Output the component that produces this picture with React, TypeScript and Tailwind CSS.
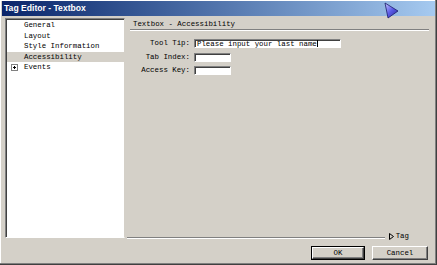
import React from 'react';

const mono = "font-['Liberation_Mono','Courier_New',monospace]";

function TreeRow({ label, active, plus }: { label: string; active?: boolean; plus?: boolean }) {
  return (
    <div className={`flex items-center h-[10.5px] leading-[10.5px] ${active ? 'bg-[#d4d0c8]' : ''}`}>
      {plus ? (
        <div className="ml-[4px] w-[7px] h-[7px] border border-[#808080] bg-white flex items-center justify-center relative">
          <div className="absolute w-[3px] h-[1px] bg-black" />
          <div className="absolute w-[1px] h-[3px] bg-black" />
        </div>
      ) : (
        <div className="ml-[4px] w-[7px]" />
      )}
      <span className="ml-[6px]">{label}</span>
    </div>
  );
}

function Field({ label, width, value, className }: { label: string; width: number; value?: string; className?: string }) {
  return (
    <div className={`flex items-center h-[9px] ${className || ''}`}>
      <div className="w-[63px] text-right leading-[9px]">{label}</div>
      <div
        className="ml-[4px] h-[9px] bg-white border-t border-l border-t-[#808080] border-l-[#808080] border-b border-r border-b-white border-r-white shadow-[inset_1px_1px_0_#404040] leading-[8px] pl-[2px] flex items-center"
        style={{ width }}
      >
        {value && (
          <>
            <span>{value}</span>
            <span className="w-[1px] h-[7px] bg-black" />
          </>
        )}
      </div>
    </div>
  );
}

export default function App() {
  return (
    <div className={`relative w-[437px] h-[265px] bg-[#d4d0c8] flex flex-col text-black text-[7.4px] ${mono} shadow-[inset_-1px_-1px_0_#404040,inset_-2px_-2px_0_#808080,inset_1px_1px_0_#ffffff]`}>
      {/* Title bar */}
      <div className="mx-[2px] mt-[1px] h-[15px] bg-linear-to-r from-[#0a246a] to-[#a6caf0] flex items-center pl-[2px]">
        <span className="font-['Liberation_Sans',Arial,sans-serif] font-bold text-[8.6px] text-white">Tag Editor - Textbox</span>
      </div>

      {/* Body */}
      <div className="flex h-[224px]">
        {/* Tree */}
        <div className="ml-[5px] mt-[2px] w-[120px] h-[220px] bg-white border-t border-l border-t-[#808080] border-l-[#808080] border-b border-r border-b-white border-r-[#d4d0c8] shadow-[inset_1px_1px_0_#404040] pt-[1px] pl-[1px]">
          <TreeRow label="General" />
          <TreeRow label="Layout" />
          <TreeRow label="Style Information" />
          <TreeRow label="Accessibility" active />
          <TreeRow label="Events" plus />
        </div>

        {/* Right pane */}
        <div className="flex-1 flex flex-col ml-[2px]">
          <div className="ml-[3px] mr-[8px] h-[14px] pt-[4px] pl-[3px] leading-[9px] border-b border-[#808080] shadow-[0_1px_0_#ffffff]">
            Textbox - Accessibility
          </div>
          <Field label="Tool Tip:" width={147} value="Please input your last name" className="mt-[9px]" />
          <Field label="Tab Index:" width={37} className="mt-[5px]" />
          <Field label="Access Key:" width={37} className="mt-[4px]" />
          <div className="flex-1" />
          <div className="flex items-center h-[8px] pr-[28px]">
            <div className="flex-1 h-[2px] border-t border-[#808080] border-b border-b-white mt-[4px]" />
            <svg width="5" height="7" viewBox="0 0 5 7" className="ml-[4px]">
              <polygon points="0.5,0.5 4.5,3.5 0.5,6.5" fill="none" stroke="#000" strokeWidth="1" />
            </svg>
            <span className="ml-[2px] leading-[8px]">Tag</span>
          </div>
        </div>
      </div>

      {/* Footer */}
      <div className="flex justify-end pt-[6px] pr-[9px] gap-[7px]">
        <button className="w-[54px] h-[14px] border border-black bg-[#d4d0c8] flex items-center justify-center p-0">
          <div className="w-full h-full border-t border-l border-white border-b border-r border-b-[#404040] border-r-[#404040] shadow-[inset_-1px_-1px_0_#808080] flex items-center justify-center leading-[8px]">
            OK
          </div>
        </button>
        <button className="w-[56px] h-[14px] border-t border-l border-white border-b border-r border-b-[#404040] border-r-[#404040] shadow-[inset_-1px_-1px_0_#808080] bg-[#d4d0c8] flex items-center justify-center leading-[8px] p-0">
          Cancel
        </button>
      </div>

      {/* Mouse cursor */}
      <svg className="absolute left-[384px] top-[2px]" width="16" height="18" viewBox="0 0 16 18">
        <defs>
          <linearGradient id="cur" x1="0" y1="0" x2="1" y2="1">
            <stop offset="0" stopColor="#c8c8ff" />
            <stop offset="0.5" stopColor="#5a5ae6" />
            <stop offset="1" stopColor="#2a2a9a" />
          </linearGradient>
        </defs>
        <polygon points="1,1 4,16 14,9" fill="url(#cur)" stroke="#1a1a6a" strokeWidth="0.8" />
      </svg>
    </div>
  );
}
